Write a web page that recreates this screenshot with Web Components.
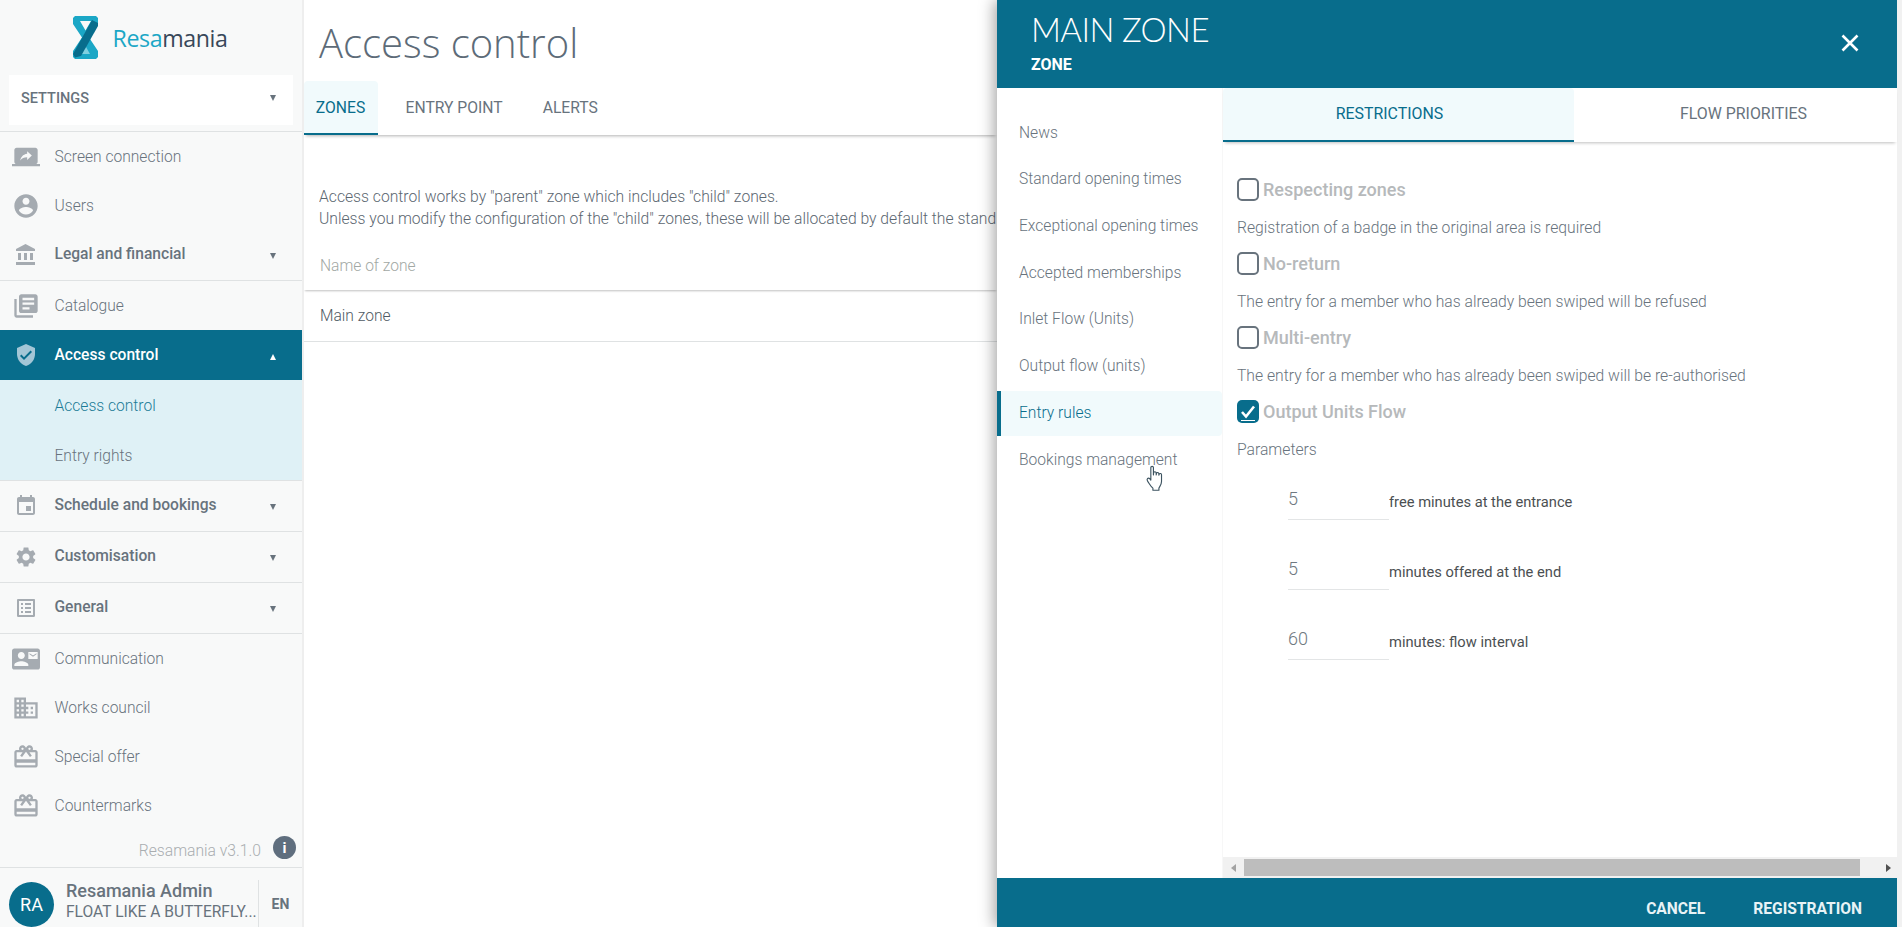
<!DOCTYPE html>
<html lang="en">
<head>
<meta charset="utf-8">
<title>Access control</title>
<style>
  html, body { margin: 0; height: 100%; overflow: hidden; background: #fff; }
  body { font-family: Roboto, "Liberation Sans", sans-serif; color: #68737d; }
  #app { display: flex; height: 927px; position: relative; }
</style>
</head>
<body>
<div id="app">
  <rs-sidebar>
    <rs-nav-item icon="screen">Screen connection</rs-nav-item>
    <rs-nav-item icon="user">Users</rs-nav-item>
    <rs-nav-item icon="bank" bold arrow divided>Legal and financial</rs-nav-item>
    <rs-nav-item icon="books">Catalogue</rs-nav-item>
    <rs-nav-item icon="shield" bold arrow="up" active>Access control</rs-nav-item>
    <rs-nav-item sub current>Access control</rs-nav-item>
    <rs-nav-item sub>Entry rights</rs-nav-item>
    <rs-nav-item icon="event" bold arrow divided topline>Schedule and bookings</rs-nav-item>
    <rs-nav-item icon="gear" bold arrow divided>Customisation</rs-nav-item>
    <rs-nav-item icon="list" bold arrow divided>General</rs-nav-item>
    <rs-nav-item icon="contact">Communication</rs-nav-item>
    <rs-nav-item icon="office">Works council</rs-nav-item>
    <rs-nav-item icon="gift">Special offer</rs-nav-item>
    <rs-nav-item icon="gift">Countermarks</rs-nav-item>
  </rs-sidebar>
  <rs-zones></rs-zones>
  <rs-drawer>
    <rs-drawer-link>News</rs-drawer-link>
    <rs-drawer-link>Standard opening times</rs-drawer-link>
    <rs-drawer-link>Exceptional opening times</rs-drawer-link>
    <rs-drawer-link>Accepted memberships</rs-drawer-link>
    <rs-drawer-link>Inlet Flow (Units)</rs-drawer-link>
    <rs-drawer-link>Output flow (units)</rs-drawer-link>
    <rs-drawer-link active>Entry rules</rs-drawer-link>
    <rs-drawer-link>Bookings management</rs-drawer-link>
    <rs-check slot="rules" desc="Registration of a badge in the original area is required">Respecting zones</rs-check>
    <rs-check slot="rules" desc="The entry for a member who has already been swiped will be refused">No-return</rs-check>
    <rs-check slot="rules" desc="The entry for a member who has already been swiped will be re-authorised">Multi-entry</rs-check>
    <rs-check slot="rules" checked desc="Parameters">Output Units Flow</rs-check>
    <rs-param slot="params" value="5">free minutes at the entrance</rs-param>
    <rs-param slot="params" value="5">minutes offered at the end</rs-param>
    <rs-param slot="params" value="60">minutes: flow interval</rs-param>
  </rs-drawer>
  <rs-cursor></rs-cursor>
</div>

<script>
// material style icons used in the side menu
const ICONS = {
  screen: '<path d="M20 18c1.1 0 1.99-.9 1.99-2L22 6c0-1.11-.9-2-2-2H4c-1.11 0-2 .89-2 2v10c0 1.1.89 2 2 2H0v2h24v-2h-4zm-7-3.53v-2.19c-2.78 0-4.61.85-6 2.72.56-2.67 2.11-5.33 6-5.87V7l4 3.73-4 3.74z"/>',
  user: '<path d="M12 2C6.48 2 2 6.48 2 12s4.48 10 10 10 10-4.48 10-10S17.52 2 12 2zm0 3c1.66 0 3 1.34 3 3s-1.34 3-3 3-3-1.34-3-3 1.34-3 3-3zm0 14.2c-2.5 0-4.71-1.28-6-3.22.03-1.99 4-3.08 6-3.08 1.99 0 5.97 1.09 6 3.08-1.29 1.94-3.5 3.22-6 3.22z"/>',
  bank: '<path d="M4 10v7h3v-7H4zm6 0v7h3v-7h-3zM2 22h19v-3H2v3zm14-12v7h3v-7h-3zm-4.5-9L2 6v2h19V6l-9.5-5z"/>',
  books: '<path d="M4 6H2v14c0 1.1.9 2 2 2h14v-2H4V6zm16-4H8c-1.1 0-2 .9-2 2v12c0 1.1.9 2 2 2h12c1.1 0 2-.9 2-2V4c0-1.1-.9-2-2-2zm-1 9H9V9h10v2zm-4 4H9v-2h6v2zm4-8H9V5h10v2z"/>',
  shield: '<path fill="#a3c6d6" d="M12 1L3 5v6c0 5.55 3.84 10.74 9 12 5.16-1.26 9-6.45 9-12V5l-9-4z"/><path fill="#086d8c" d="M10 17l-4-4 1.41-1.41L10 14.17l6.59-6.59L18 9l-8 8z"/>',
  event: '<path d="M17 12h-5v5h5v-5zM16 1v2H8V1H6v2H5c-1.11 0-1.99.9-1.99 2L3 19c0 1.1.89 2 2 2h14c1.1 0 2-.9 2-2V5c0-1.1-.9-2-2-2h-1V1h-2zm3 18H5V8h14v11z"/>',
  gear: '<path d="M19.14 12.94c.04-.3.06-.61.06-.94 0-.32-.02-.64-.07-.94l2.03-1.58c.18-.14.23-.41.12-.61l-1.92-3.32c-.12-.22-.37-.29-.59-.22l-2.39.96c-.5-.38-1.03-.7-1.62-.94l-.36-2.54c-.04-.24-.24-.41-.48-.41h-3.84c-.24 0-.43.17-.47.41l-.36 2.54c-.59.24-1.13.57-1.62.94l-2.39-.96c-.22-.08-.47 0-.59.22L2.74 8.87c-.12.21-.08.47.12.61l2.03 1.58c-.05.3-.09.63-.09.94s.02.64.07.94l-2.03 1.58c-.18.14-.23.41-.12.61l1.92 3.32c.12.22.37.29.59.22l2.39-.96c.5.38 1.03.7 1.62.94l.36 2.54c.05.24.24.41.48.41h3.84c.24 0 .44-.17.47-.41l.36-2.54c.59-.24 1.13-.56 1.62-.94l2.39.96c.22.08.47 0 .59-.22l1.92-3.32c.12-.22.07-.47-.12-.61l-2.01-1.58zM12 15.6c-1.98 0-3.6-1.62-3.6-3.6s1.62-3.6 3.6-3.6 3.6 1.62 3.6 3.6-1.62 3.6-3.6 3.6z"/>',
  list: '<path d="M19 5v14H5V5h14m1.1-2H3.9c-.5 0-.9.4-.9.9v16.2c0 .4.4.9.9.9h16.2c.4 0 .9-.5.9-.9V3.9c0-.5-.5-.9-.9-.9zM11 7h6v2h-6V7zm0 4h6v2h-6v-2zm0 4h6v2h-6zM7 7h2v2H7zm0 4h2v2H7zm0 4h2v2H7z"/>',
  contact: '<path d="M21 8V7l-3 2-3-2v1l3 2 3-2zm1-5H2C.9 3 0 3.9 0 5v14c0 1.1.9 2 2 2h20c1.1 0 1.99-.9 1.99-2L24 5c0-1.1-.9-2-2-2zM8 6c1.66 0 3 1.34 3 3s-1.34 3-3 3-3-1.34-3-3 1.34-3 3-3zm6 12H2v-1c0-2 4-3.1 6-3.1s6 1.1 6 3.1v1zm8-6h-8V6h8v6z"/>',
  office: '<path d="M12 7V3H2v18h20V7H12zM6 19H4v-2h2v2zm0-4H4v-2h2v2zm0-4H4V9h2v2zm0-4H4V5h2v2zm4 12H8v-2h2v2zm0-4H8v-2h2v2zm0-4H8V9h2v2zm0-4H8V5h2v2zm10 12h-8v-2h2v-2h-2v-2h2v-2h-2V9h8v10zm-2-8h-2v2h2v-2zm0 4h-2v2h2v-2z"/>',
  gift: '<path d="M20 6h-2.18c.11-.31.18-.65.18-1 0-1.66-1.34-3-3-3-1.05 0-1.96.54-2.5 1.35l-.5.67-.5-.68C10.96 2.54 10.05 2 9 2 7.34 2 6 3.34 6 5c0 .35.07.69.18 1H4c-1.11 0-1.99.89-1.99 2L2 19c0 1.11.89 2 2 2h16c1.11 0 2-.89 2-2V8c0-1.11-.89-2-2-2zm-5-2c.55 0 1 .45 1 1s-.45 1-1 1-1-.45-1-1 .45-1 1-1zM9 4c.55 0 1 .45 1 1s-.45 1-1 1-1-.45-1-1 .45-1 1-1zm11 15H4v-2h16v2zm0-5H4V8h5.08L7 10.83 8.62 12 11 8.76l1-1.36 1 1.36L15.38 12 17 10.83 14.92 8H20v6z"/>'
};

class RsElement extends HTMLElement {
  constructor() {
    super();
    this.attachShadow({ mode: "open" });
  }
  connectedCallback() {
    this.shadowRoot.innerHTML = this.render();
  }
}

class RsLogo extends RsElement {
  render() {
    return `
      <style>
        :host { display: flex; align-items: center; justify-content: center; height: 75px; gap: 15px; padding-right: 2px; }
        svg { display: block; }
        .name { font: 400 23.2px "Open Sans", sans-serif; color: #38485a; letter-spacing: -.4px; margin-top: 1px; }
        .name b { font-weight: 400; color: #1ba7c6; }
      </style>
      <svg width="25" height="43" viewBox="0 0 25 43">
        <path fill="#1ba7c6" fill-rule="evenodd" d="M2 0h21l2 2v6l-9 13.500 9 13.500v6l-2 2H2l-2-2v-6l9-13.500L0 8V2zM7 5l5.500 9.500L18 5z"/>
        <path fill="#7fd0e0" d="M8 38l4.500-8 4.500 8z"/>
        <path fill="#086d8c" d="M19 4l6 3v3L8 40l-6 1.500L0 38z"/>
      </svg>
      <span class="name"><b>Resa</b>mania</span>`;
  }
}

class RsSelect extends RsElement {
  render() {
    return `
      <style>
        :host { display: flex; align-items: center; justify-content: space-between; height: 50px; margin: 0 9px 6px; padding: 0 12px 4px; background: #fff; box-sizing: border-box;
          font: 500 14.5px Roboto, sans-serif; color: #68737d; }
        i { border: 3.5px solid transparent; border-top: 6px solid #68737d; border-bottom: 0; width: 0; height: 0; margin-right: 5px; }
      </style>
      <span>SETTINGS</span><i></i>`;
  }
}

class RsNavItem extends RsElement {
  render() {
    const icon = this.getAttribute("icon");
    const arrow = this.getAttribute("arrow");
    const size = this.hasAttribute("bold") ? 24 : 28;
    const svg = icon ? `<svg viewBox="0 0 24 24" width="${size}" height="${size}">${ICONS[icon]}</svg>` : "";
    const caret = arrow === null ? "" : `<i class="${arrow === "up" ? "up" : ""}"></i>`;
    return `
      <style>
        :host { display: flex; align-items: center; height: 49px; position: relative; padding-right: 26px;
          font: 300 15.6px Roboto, sans-serif; color: #68737d; }
        :host([divided]) { height: 50px; border-bottom: 1px solid #dfe2e3; }
        :host([divided]) .label { padding-bottom: 2px; }
        :host([bold]) { font-weight: 500; font-size: 15.6px; }
        :host([active]) { height: 50px; background: #086d8c; color: #fff; }
        :host([sub]) { height: 50px; background: #dff1f6; }
        :host([sub]) .label { padding-top: 2px; }
        :host([current]) { color: #1c7c97; }
        :host([topline]) { border-top: 1px solid #dfe2e3; }
        .ico { flex: none; width: 54.500px; display: flex; justify-content: center; padding-right: 2.500px; box-sizing: border-box; fill: #a5abb1; }
        svg { display: block; }
        .label { flex: 1; white-space: nowrap; }
        i { border: 3.5px solid transparent; border-top: 6px solid #68737d; border-bottom: 0; width: 0; height: 0; margin-top: 2px; }
        i.up { border-top: 0; border-bottom: 6px solid #fff; margin-top: 4px; }
      </style>
      <span class="ico">${svg}</span>
      <span class="label"><slot></slot></span>
      ${caret}`;
  }
}

class RsUser extends RsElement {
  render() {
    return `
      <style>
        :host { display: flex; height: 60px; border-top: 1px solid #dfe2e3; box-sizing: border-box; overflow: hidden; position: relative; font-family: Roboto, sans-serif; }
        .avatar { flex: none; width: 45px; height: 45px; margin: 14px 12px 0 9px; border-radius: 50%; background: #086d8c; color: #fff;
          display: flex; align-items: center; justify-content: center; font-size: 18px; }
        .who { flex: none; width: 192px; padding-top: 13px; white-space: nowrap; color: #68737d; }
        .name { font-size: 18px; font-weight: 500; line-height: 20px; }
        .club { font-size: 15.600px; line-height: 23px; font-weight: 400; }
        .lang { flex: none; margin-top: 12px; width: 44px; border-left: 1px solid #dfe2e3; display: flex; justify-content: center; padding-top: 16px; font-size: 14px; font-weight: 700; color: #68737d; box-sizing: border-box; }
      </style>
      <div class="avatar">RA</div>
      <div class="who"><div class="name">Resamania Admin</div><div class="club">FLOAT LIKE A BUTTERFLY...</div></div>
      <div class="lang">EN</div>`;
  }
}

class RsSidebar extends RsElement {
  render() {
    return `
      <style>
        :host { display: flex; flex-direction: column; flex: none; width: 302px; height: 927px; background: #f8f9f9; border-right: 2px solid #eeeeee; }
        .menu { border-top: 1px solid #dfe2e3; flex: 1; }
        .version { display: flex; align-items: center; justify-content: flex-end; gap: 12px; height: 36px; padding-right: 6px; font: 300 15.700px Roboto, sans-serif; color: #a9adb0; }
        .version span:first-child { margin-top: 2px; }
        .info { width: 23px; height: 23px; margin-top: -3px; border-radius: 50%; background: #5f6e7e; color: #fff; display: flex; align-items: center; justify-content: center; font: 700 15px Roboto, sans-serif; }
      </style>
      <rs-logo></rs-logo>
      <rs-select></rs-select>
      <div class="menu"><slot></slot></div>
      <div class="version"><span>Resamania v3.1.0</span><span class="info">i</span></div>
      <rs-user></rs-user>`;
  }
}

class RsTab extends RsElement {
  render() {
    return `
      <style>
        :host { display: flex; align-items: center; justify-content: center; box-sizing: border-box; height: 100%; color: #68737d; white-space: nowrap; }
        :host([active]) { background: #f1fafc; color: #086d8c; border-bottom: 2px solid #086d8c; border-radius: 4px 4px 0 0; }
      </style>
      <slot></slot>`;
  }
}

class RsZones extends RsElement {
  render() {
    return `
      <style>
        :host { display: block; flex: none; width: 693px; overflow: hidden; font-family: Roboto, sans-serif; color: #68737d; }
        h1 { margin: 0; height: 81px; box-sizing: border-box; padding: 18px 0 0 15px; font: 300 40px/50px "Open Sans", sans-serif; color: #5d6b78; white-space: nowrap; }
        .tabs { display: flex; height: 54px; box-shadow: 0 3px 3px -2px rgba(0,0,0,.3); font-size: 15.7px; }
        rs-tab { padding: 0 20px 2px; }
        rs-tab[active] { padding: 0 1px 0 0; width: 74px; }
        rs-tab.second { margin-left: 7.500px; }
        p { margin: 51px 0 0 15px; font-weight: 300; font-size: 15.700px; line-height: 22px; color: #5c6771; white-space: nowrap; overflow: hidden; }
        .head { margin-top: 11px; height: 49px; padding: 16px 0 0 16px; box-sizing: border-box; font-weight: 300; font-size: 15.6px; color: #a2a8a4; box-shadow: 0 2px 2px -1px rgba(0,0,0,.25); line-height: 18px; }
        .row { height: 52px; padding-left: 16px; display: flex; align-items: center; box-sizing: border-box; border-bottom: 1px solid #dfe2e3; font-weight: 300; font-size: 15.6px; color: #4f5a63; }
      </style>
      <h1>Access control</h1>
      <div class="tabs">
        <rs-tab active>ZONES</rs-tab>
        <rs-tab class="second">ENTRY POINT</rs-tab>
        <rs-tab>ALERTS</rs-tab>
      </div>
      <p>Access control works by "parent" zone which includes "child" zones.<br>Unless you modify the configuration of the "child" zones, these will be allocated by default the stand</p>
      <div class="head">Name of zone</div>
      <div class="row">Main zone</div>`;
  }
}

class RsDrawerLink extends RsElement {
  render() {
    return `
      <style>
        :host { display: flex; align-items: center; height: 46.7px; padding-left: 22px; box-sizing: border-box; font: 300 15.6px Roboto, sans-serif; color: #68737d; white-space: nowrap; }
        :host([active]) { height: 45px; margin: 1px 0; padding-left: 18px; border-left: 4px solid #086d8c; background: #f1fafc; color: #086d8c; border-radius: 0 4px 4px 0; }
      </style>
      <slot></slot>`;
  }
}

class RsCheck extends RsElement {
  render() {
    const on = this.hasAttribute("checked");
    const tick = on ? `<svg viewBox="0 0 22 23" width="22" height="23"><path d="M5 12l4 4.5 8-10" fill="none" stroke="#fff" stroke-width="2.6"/><path d="M4 20.5h14" stroke="#fff" stroke-width="1"/></svg>` : "";
    return `
      <style>
        :host { display: block; font-family: Roboto, sans-serif; }
        .line { display: flex; align-items: center; height: 23px; gap: 4px; }
        .box { flex: none; width: 22px; height: 23px; box-sizing: border-box; border: 2px solid #68737d; border-radius: 5px; }
        .box.on { border: 0; background: #086d8c; }
        svg { display: block; }
        .text { font-size: 18px; font-weight: 500; color: #b6b9bb; margin-bottom: 1px; }
        .desc { font-weight: 300; font-size: 15.700px; color: #68737d; line-height: 54px; height: 51px; }
      </style>
      <div class="line"><span class="box ${on ? "on" : ""}">${tick}</span><span class="text"><slot></slot></span></div>
      <div class="desc">${this.getAttribute("desc")}</div>`;
  }
}

class RsParam extends RsElement {
  render() {
    return `
      <style>
        :host { display: flex; align-items: flex-end; height: 70px; font-family: Roboto, sans-serif; }
        .val { flex: none; box-sizing: border-box; width: 101px; height: 35px; padding: 4px 0 0 0; border-bottom: 1px solid #e3e5e6; font-weight: 300; font-size: 18px; line-height: 20px; color: #6f7980; }
        .txt { font-size: 14.700px; line-height: 18px; color: #4b4f52; padding-bottom: 9px; font-weight: 400; }
      </style>
      <div class="val">${this.getAttribute("value")}</div>
      <div class="txt"><slot></slot></div>`;
  }
}

class RsScrollbar extends RsElement {
  render() {
    return `
      <style>
        :host { display: flex; align-items: center; height: 21px; background: #f1f1f1; flex: none; }
        .l, .r { flex: none; width: 21px; display: flex; justify-content: center; }
        .l i { border: 4px solid transparent; border-right: 5px solid #a3a3a3; border-left: 0; }
        .r { width: 37px; justify-content: flex-end; padding-right: 6px; box-sizing: border-box; }
        .r i { border: 4px solid transparent; border-left: 5px solid #505050; border-right: 0; }
        .thumb { flex: 1; height: 17px; background: #bdbdbd; }
      </style>
      <div class="l"><i></i></div><div class="thumb"></div><div class="r"><i></i></div>`;
  }
}

class RsDrawer extends RsElement {
  render() {
    return `
      <style>
        :host { position: absolute; top: 0; right: 0; bottom: 0; width: 900px; border-right: 5px solid #f1f1f1; display: flex; flex-direction: column; background: #fff; box-shadow: -3px 0 14px rgba(0,0,0,.35); font-family: Roboto, sans-serif; }
        header { flex: none; height: 88px; background: #086d8c; color: #fff; display: flex; justify-content: space-between; box-sizing: border-box; padding: 0 35px 0 34px; }
        h2 { margin: 9px 0 0; font: 300 33px/40px Lato, sans-serif; letter-spacing: -.6px; }
        h3 { margin: 7px 0 0; font: 700 16px/18px Roboto, sans-serif; }
        .close { margin-top: 31px; }
        .body { flex: 1; display: flex; min-height: 0; }
        nav { flex: none; width: 225px; padding-top: 21.400px; box-sizing: border-box; }
        .right { flex: 1; min-width: 0; display: flex; flex-direction: column; border-left: 1px solid #f7f7f7; }
        .tabs { flex: none; display: flex; height: 54px; font-size: 15.900px; box-shadow: 0 3px 3px -2px rgba(0,0,0,.25); }
        .tabs rs-tab { padding-bottom: 4px; }
        .tabs rs-tab:first-child { width: 351px; padding-right: 18px; padding-bottom: 2px; }
        .tabs rs-tab:last-child { flex: 1; padding-left: 16px; }
        .pane { flex: 1; padding: 36px 0 0 14px; box-sizing: border-box; }
        .params { padding: 0 0 0 51px; margin-top: -24px; }
        footer { flex: none; height: 49px; background: #086d8c; color: #e8f3f6; display: flex; justify-content: flex-end; align-items: center; gap: 48px; padding: 13px 35px 0 0; box-sizing: border-box; font-size: 15.6px; font-weight: 700; }
      </style>
      <header>
        <div><h2>MAIN ZONE</h2><h3>ZONE</h3></div>
        <svg class="close" width="24" height="24" viewBox="0 0 24 24"><path d="M4.5 4.5l15 15M19.500 4.500l-15 15" stroke="#fff" stroke-width="2.600" fill="none"/></svg>
      </header>
      <div class="body">
        <nav><slot></slot></nav>
        <div class="right">
          <div class="tabs"><rs-tab active>RESTRICTIONS</rs-tab><rs-tab>FLOW PRIORITIES</rs-tab></div>
          <div class="pane">
            <slot name="rules"></slot>
            <div class="params"><slot name="params"></slot></div>
          </div>
          <rs-scrollbar></rs-scrollbar>
        </div>
      </div>
      <footer><span>CANCEL</span><span>REGISTRATION</span></footer>`;
  }
}

class RsCursor extends RsElement {
  render() {
    return `
      <style>
        :host { position: absolute; left: 1145px; top: 465px; width: 21px; height: 28px; }
        svg { display: block; }
      </style>
      <svg width="21" height="28" viewBox="0 0 20 27"><path d="M5.500 2.500c0-1.600 2.500-1.600 2.500 0v7l.2-2c.3-1.300 2.300-1.300 2.400.1l.1 2 .2-1.500c.3-1.200 2.200-1.100 2.300.2l.1 1.500.3-1c.4-1 2.200-.8 2.200.5v6.500c0 3-1.500 4.500-2.500 6.500v2H7.500v-2c-2-1.500-3-3.500-5-6.500-1.500-2 .2-4 2.100-2.500l.9 1.200z" fill="#fff" stroke="#3c5360" stroke-width="1.100" stroke-linejoin="round"/></svg>`;
  }
}

customElements.define("rs-logo", RsLogo);
customElements.define("rs-select", RsSelect);
customElements.define("rs-nav-item", RsNavItem);
customElements.define("rs-user", RsUser);
customElements.define("rs-sidebar", RsSidebar);
customElements.define("rs-tab", RsTab);
customElements.define("rs-zones", RsZones);
customElements.define("rs-drawer-link", RsDrawerLink);
customElements.define("rs-check", RsCheck);
customElements.define("rs-param", RsParam);
customElements.define("rs-scrollbar", RsScrollbar);
customElements.define("rs-drawer", RsDrawer);
customElements.define("rs-cursor", RsCursor);
</script>
</body>
</html>
